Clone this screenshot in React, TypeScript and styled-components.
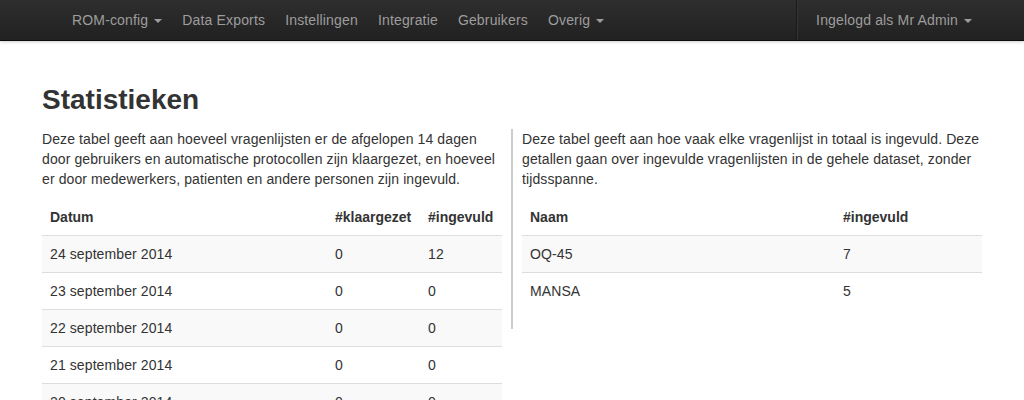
import React from 'react';
import styled, { createGlobalStyle } from 'styled-components';

interface DayRow {
    date: string;
    ready: number;
    filled: number;
}

interface ListRow {
    name: string;
    filled: number;
}

const days: DayRow[] = [
    { date: '24 september 2014', ready: 0, filled: 12 },
    { date: '23 september 2014', ready: 0, filled: 0 },
    { date: '22 september 2014', ready: 0, filled: 0 },
    { date: '21 september 2014', ready: 0, filled: 0 },
    { date: '20 september 2014', ready: 0, filled: 0 },
    { date: '19 september 2014', ready: 0, filled: 0 },
];

const lists: ListRow[] = [
    { name: 'OQ-45', filled: 7 },
    { name: 'MANSA', filled: 5 },
];

const navItems = [
    { label: 'ROM-config', dropdown: true },
    { label: 'Data Exports' },
    { label: 'Instellingen' },
    { label: 'Integratie' },
    { label: 'Gebruikers' },
    { label: 'Overig', dropdown: true },
];

const App = () => {
    return (
        <>
            <GlobalStyle />
            <Navbar>
                <NavInner>
                    <NavList>
                        {navItems.map((item) => (
                            <NavLink key={item.label} href="#">
                                {item.label}
                                {item.dropdown && <Caret />}
                            </NavLink>
                        ))}
                    </NavList>
                    <NavRight>
                        <NavLink href="#">
                            Ingelogd als Mr Admin
                            <Caret />
                        </NavLink>
                    </NavRight>
                </NavInner>
            </Navbar>
            <Container>
                <Title>Statistieken</Title>
                <Columns>
                    <Column>
                        <Intro>
                            Deze tabel geeft aan hoeveel vragenlijsten er de afgelopen 14 dagen
                            door gebruikers en automatische protocollen zijn klaargezet, en hoeveel
                            er door medewerkers, patienten en andere personen zijn ingevuld.
                        </Intro>
                        <Table>
                            <colgroup>
                                <col style={{ width: 285 }} />
                                <col style={{ width: 93 }} />
                                <col />
                            </colgroup>
                            <thead>
                                <tr>
                                    <th>Datum</th>
                                    <th>#klaargezet</th>
                                    <th>#ingevuld</th>
                                </tr>
                            </thead>
                            <tbody>
                                {days.map((d) => (
                                    <tr key={d.date}>
                                        <td>{d.date}</td>
                                        <td>{d.ready}</td>
                                        <td>{d.filled}</td>
                                    </tr>
                                ))}
                            </tbody>
                        </Table>
                    </Column>
                    <Column $divided>
                        <Intro>
                            Deze tabel geeft aan hoe vaak elke vragenlijst in totaal is ingevuld. Deze
                            getallen gaan over ingevulde vragenlijsten in de gehele dataset, zonder
                            tijdsspanne.
                        </Intro>
                        <Table>
                            <colgroup>
                                <col style={{ width: 313 }} />
                                <col />
                            </colgroup>
                            <thead>
                                <tr>
                                    <th>Naam</th>
                                    <th>#ingevuld</th>
                                </tr>
                            </thead>
                            <tbody>
                                {lists.map((l) => (
                                    <tr key={l.name}>
                                        <td>{l.name}</td>
                                        <td>{l.filled}</td>
                                    </tr>
                                ))}
                            </tbody>
                        </Table>
                    </Column>
                </Columns>
            </Container>
        </>
    );
};

const GlobalStyle = createGlobalStyle`
    body {
        margin: 0;
        background: #fff;
        font-family: "Liberation Sans", Arial, sans-serif;
        font-size: 14px;
        line-height: 20px;
        letter-spacing: 0.1px;
        color: #333;
    }
`;

const Navbar = styled.div`
    height: 40px;
    background: linear-gradient(to bottom, #2e2e2e, #212121);
    border-bottom: 1px solid #0c0c0c;
    box-shadow: 0 1px 3px rgba(0, 0, 0, 0.2);
`;

const NavInner = styled.div`
    width: 940px;
    margin: 0 auto;
    display: flex;
    justify-content: space-between;
    height: 40px;
`;

const NavList = styled.div`
    display: flex;
    padding-left: 20px;
`;

const NavRight = styled.div`
    display: flex;
    border-left: 1px solid #1a1a1a;
    box-shadow: inset 1px 0 0 #343434;
    padding-left: 9px;
`;

const NavLink = styled.a`
    display: flex;
    align-items: center;
    padding: 0 10px;
    height: 40px;
    color: #9d9d9d;
    text-decoration: none;
    font-size: 14px;
    letter-spacing: 0.16px;
`;

const Caret = styled.span`
    display: inline-block;
    width: 0;
    height: 0;
    margin-left: 6px;
    margin-top: 1px;
    border-top: 4px solid #9d9d9d;
    border-left: 4px solid transparent;
    border-right: 4px solid transparent;
`;

const Container = styled.div`
    width: 940px;
    margin: 0 auto;
    padding-top: 39px;
`;

const Title = styled.h1`
    margin: 0 0 9px;
    font-size: 28px;
    line-height: 40px;
    font-weight: bold;
    letter-spacing: 0;
    color: #333;
`;

const Columns = styled.div`
    display: grid;
    grid-template-columns: 460px 460px;
    column-gap: 20px;
    align-items: start;
`;

const Column = styled.div<{ $divided?: boolean }>`
    ${({ $divided }) =>
        $divided &&
        `
        margin-left: -11px;
        padding-left: 9px;
        border-left: 2px solid #cccccc;
    `}
`;

const Intro = styled.p`
    margin: 0 0 10px;
`;

const Table = styled.table`
    width: 100%;
    border-collapse: collapse;
    margin-bottom: 20px;
    table-layout: fixed;

    th,
    td {
        padding: 8px;
        text-align: left;
        line-height: 20px;
        vertical-align: top;
    }

    th {
        font-weight: bold;
        letter-spacing: 0;
    }

    td {
        border-top: 1px solid #dddddd;
    }

    tbody tr:nth-child(odd) td {
        background: #f9f9f9;
    }
`;

export default App;
